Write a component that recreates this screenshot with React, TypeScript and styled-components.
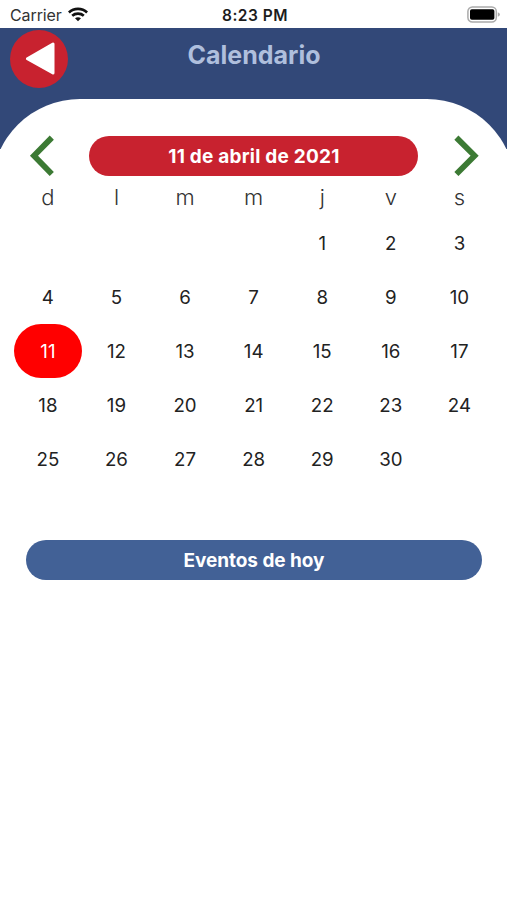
import React from "react";
import styled, { createGlobalStyle } from "styled-components";

const GlobalStyle = createGlobalStyle`
  * { box-sizing: border-box; }
  body { margin: 0; background: #fff; font-family: Inter, "Liberation Sans", sans-serif; color: #222; }
  button { font: inherit; border: 0; padding: 0; background: none; color: inherit; }
`;

const Screen = styled.main`
  width: 507px;
  height: 900px;
  overflow: hidden;
  background: #fff;
`;

const StatusBar = styled.div`
  display: grid;
  grid-template-columns: 1fr auto 1fr;
  align-items: center;
  height: 28px;
  padding: 2px 7px 0 10px;
  font-size: 16px;
  line-height: 24px;
`;

const Carrier = styled.div`
  display: flex;
  align-items: center;
  gap: 6px;
  font-size: 16px;
  letter-spacing: -0.1px;
  color: #333;
`;

const Time = styled.div`
  padding-top: 2px;
  font-weight: 600;
  font-size: 15.5px;
  letter-spacing: 0.5px;
  color: #1c1c1c;
`;

const Battery = styled.svg`
  justify-self: end;
  margin-bottom: 2px;
`;

const Header = styled.header`
  display: grid;
  grid-template-columns: 58px 1fr 58px;
  align-items: start;
  height: 71px;
  padding: 2px 10px 0;
  background: #324878;
`;

const BackButton = styled.button`
  display: flex;
  width: 58px;
  height: 58px;
  border-radius: 50%;
  background: #c8222f;
`;

const Title = styled.h1`
  margin: 9px 0 0;
  padding-left: 1px;
  text-align: center;
  font-size: 25px;
  line-height: 32px;
  font-weight: 650;
  letter-spacing: 0;
  color: #afbfdd;
`;

const Shoulders = styled.div`
  height: 50px;
  overflow: hidden;
  background: #324878;
`;

const Curve = styled.div`
  height: 190px;
  margin: 0 -8px;
  border-radius: 88px 88px 0 0;
  background: #fff;
`;

const MonthBar = styled.div`
  display: flex;
  justify-content: space-between;
  align-items: center;
  height: 41px;
  margin-top: -14px;
  padding: 0 27px 0 27.9px;
`;

const Arrow = styled.button`
  display: flex;
`;

const Pill = styled.div<{ $tone: string; $width: number; $tracking: number }>`
  display: flex;
  align-items: center;
  justify-content: center;
  width: ${(p) => p.$width}px;
  height: 40px;
  padding-top: 2px;
  border-radius: 20px;
  background: ${(p) => p.$tone};
  color: #fff;
  font-size: 19px;
  font-weight: 700;
  letter-spacing: ${(p) => p.$tracking}px;
  line-height: 24px;
`;

const Grid = styled.div`
  display: grid;
  grid-template-columns: repeat(7, 1fr);
  margin: -1px 13.3px 0 13.6px;
`;

const Weekday = styled.div`
  height: 41px;
  line-height: 44px;
  text-align: center;
  font-size: 22px;
  font-weight: 300;
  color: #333;
`;

const Day = styled.div<{ $selected?: boolean }>`
  height: 54px;
  line-height: 56px;
  border-radius: 27px;
  text-align: center;
  font-size: 18.7px;
  background: ${(p) => (p.$selected ? "#ff0000" : "transparent")};
  color: ${(p) => (p.$selected ? "#fff" : "#222")};
`;

const Events = styled.section`
  display: flex;
  justify-content: center;
  padding: 54px 0 0 1px;
`;

const weekdays = ["d", "l", "m", "m", "j", "v", "s"];
const leading = 4;
const days = Array.from({ length: 30 }, (_, i) => i + 1);

export default function App() {
  return (
    <>
      <GlobalStyle />
      <Screen>
        <StatusBar>
          <Carrier>
            Carrier
            <svg width="20" height="17" viewBox="0 0 20 17" fill="none" stroke="#111" strokeWidth="2.7">
              <path d="M0.9 5.4C6 .7 14 .7 19.1 5.4" />
              <path d="M4.2 8.7C7.4 5.9 12.6 5.9 15.8 8.7" />
              <path d="M7 11.2C8.7 9.8 11.3 9.8 13 11.2L10 14.2Z" fill="#111" stroke="none" />
            </svg>
          </Carrier>
          <Time>8:23 PM</Time>
          <Battery width="33" height="17" viewBox="0 0 33 17">
            <rect x="0.9" y="0.9" width="28.4" height="15.2" rx="4.5" fill="#fff" stroke="#aaa" strokeWidth="1.5" />
            <rect x="3" y="3.2" width="24.4" height="10.6" rx="1.8" fill="#000" />
            <path d="M30.8 6.3Q33 7 33 8.5T30.8 10.7Z" fill="#aaa" />
          </Battery>
        </StatusBar>
        <Header>
          <BackButton aria-label="Atrás">
            <svg width="58" height="58" viewBox="0 0 58 58">
              <path d="M17.4 28.8L43 14V43Z" fill="#fff" stroke="#fff" strokeWidth="3" strokeLinejoin="round" />
            </svg>
          </BackButton>
          <Title>Calendario</Title>
        </Header>
        <Shoulders>
          <Curve />
        </Shoulders>
        <MonthBar>
          <Arrow aria-label="Mes anterior">
            <svg width="26" height="41" viewBox="0 0 26 41" fill="none" stroke="#3c7a34" strokeWidth="5.8">
              <path d="M23.8 2.6L6 20.8L23.8 39" />
            </svg>
          </Arrow>
          <Pill $tone="#c8222f" $width={329} $tracking={0.23}>11 de abril de 2021</Pill>
          <Arrow aria-label="Mes siguiente">
            <svg width="26" height="41" viewBox="0 0 26 41" fill="none" stroke="#3c7a34" strokeWidth="5.8">
              <path d="M2.4 2.6L20.6 20.8L2.4 39" />
            </svg>
          </Arrow>
        </MonthBar>
        <Grid>
          {weekdays.map((name, i) => (
            <Weekday key={i}>{name}</Weekday>
          ))}
          {Array.from({ length: leading }, (_, i) => (
            <Day key={`blank-${i}`} />
          ))}
          {days.map((day) => (
            <Day key={day} $selected={day === 11}>
              {day}
            </Day>
          ))}
        </Grid>
        <Events>
          <Pill $tone="#426196" $width={456} $tracking={-0.05}>Eventos de hoy</Pill>
        </Events>
      </Screen>
    </>
  );
}
